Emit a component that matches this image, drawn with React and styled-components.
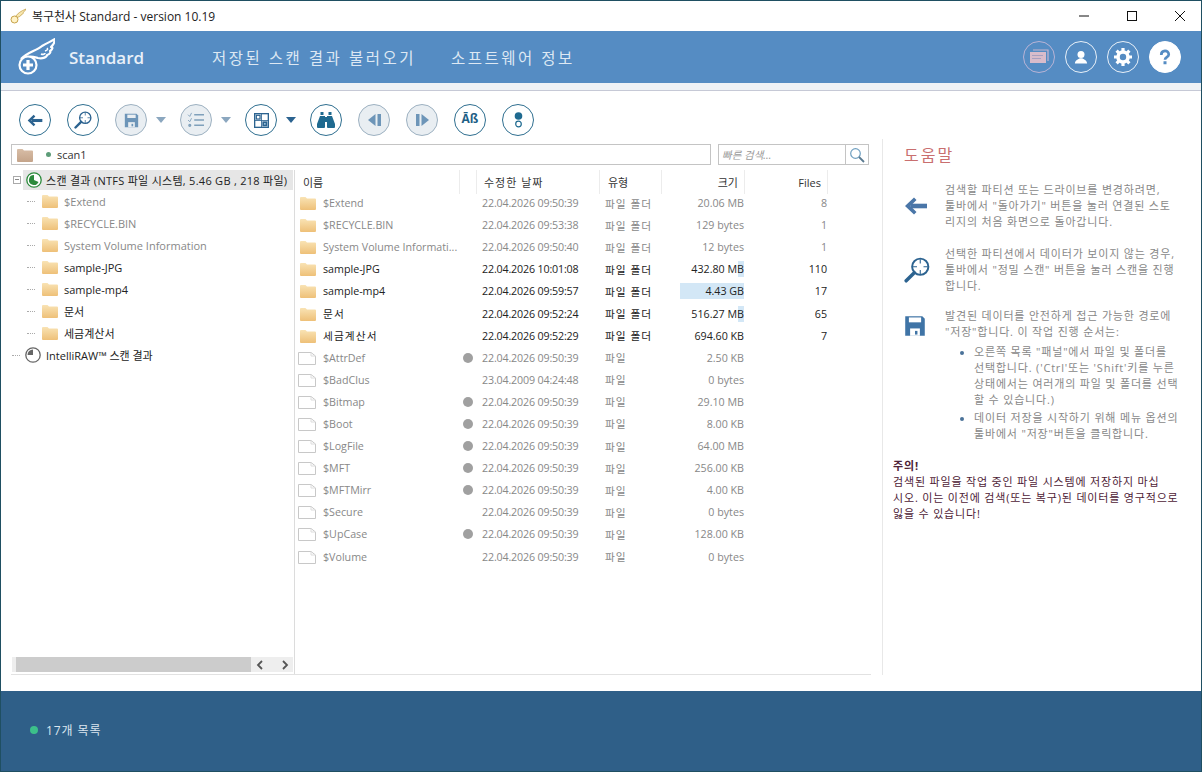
import React from "react";
import styled, { createGlobalStyle } from "styled-components";

const Global = createGlobalStyle`
  html, body { margin: 0; padding: 0; background: #fff; }
  body { font-family: "Open Sans", "Noto Sans CJK KR", sans-serif; font-size: 11px; }
  * { box-sizing: border-box; }
`;

const Win = styled.div`
  width: 1202px; height: 772px; border: 1px solid #1f4f62; display: flex; flex-direction: column; background: #fff; overflow: hidden;
`;
const TitleBar = styled.div`
  height: 30px; display: flex; align-items: center; padding-left: 9px; gap: 6px; font-size: 12px; color: #222; flex: none;
`;
const TitleText = styled.span`flex: 1;`;
const WinBtn = styled.div`
  width: 42px; height: 30px; display: flex; align-items: center; justify-content: center;
`;
const Head = styled.div`
  height: 52px; background: #558cc3; display: flex; align-items: center; padding-left: 16px; flex: none;
`;
const Brand = styled.div`
  font-size: 17px; font-weight: 600; color: #e9f0f8; margin-left: 14px; width: 143px;
`;
const Nav = styled.div`
  font-size: 15.5px; color: #dde8f3; margin-right: 35px; letter-spacing: 2.5px; white-space: nowrap;
`;
const HeadIcons = styled.div`
  margin-left: auto; display: flex; gap: 10px; padding-right: 20px;
`;
const HeadCircle = styled.div`
  width: 32px; height: 32px; border-radius: 50%; display: flex; align-items: center; justify-content: center;
  border: 1.5px solid ${p => p.$c || "#e8f0f8"}; background: ${p => p.$fill ? "#fff" : "transparent"};
`;
const Stripe = styled.div`
  height: 8px; background: #eef2f6; border-bottom: 1px solid #c6c9d6; flex: none;
`;
const Body = styled.div`
  flex: 1; display: flex; min-height: 0; padding-bottom: 16px;
`;
const Left = styled.div`
  width: 881px; padding: 0 11px 0 10px; display: flex; flex-direction: column;
`;
const Toolbar = styled.div`
  height: 53px; flex: none; display: flex; align-items: center; padding: 5px 0 0 8px;
`;
const Tool = styled.div`
  width: 32px; height: 32px; border-radius: 50%; flex: none; display: flex; align-items: center; justify-content: center;
  border: 1.5px solid ${p => p.$off ? "#9db1c1" : "#2f6f90"}; background: ${p => p.$off ? "#e9eef2" : "#fff"};
  margin-right: ${p => p.$mr ?? 16}px;
`;
const Caret = styled.div`
  width: 0; height: 0; border-left: 5px solid transparent; border-right: 5px solid transparent;
  border-top: 6px solid ${p => p.$off ? "#8ba7bf" : "#2c6390"}; margin-right: 14px; margin-left: 9px; flex: none;
`;
const PathRow = styled.div`
  display: flex; gap: 7px; height: 21px; flex: none; padding-right: 2px;
`;
const PathBox = styled.div`
  width: 700px; border: 1px solid #c4c4c4; display: flex; align-items: center; padding-left: 5px; color: #333;
`;
const Dot = styled.span`
  width: 5px; height: 5px; border-radius: 50%; background: #5d9c78; margin: 0 6px 0 13px;
`;
const SearchBox = styled.div`
  width: 151px; border: 1px solid #c4c4c4; display: flex; align-items: center; color: #999; font-style: italic; font-size: 10.5px; padding-left: 3px;
`;
const SearchLabel = styled.span`flex: 1;`;
const SearchBtn = styled.div`
  width: 23px; height: 100%; border-left: 1px solid #c4c4c4; display: flex; align-items: center; justify-content: center;
`;
const Panels = styled.div`
  flex: 1; min-height: 0; margin: 5px 0 0 0; display: flex; border-bottom: 1px solid #e2e2e2;
`;
const Tree = styled.div`
  width: 284px; border-right: 1px solid #dcdcdc; flex: none; display: flex; flex-direction: column;
  padding: 0 0 0 1px;
`;
const TreeRows = styled.div`flex: 1;`;
const TreeRow = styled.div`
  height: ${p => p.$h ?? 22}px; display: flex; align-items: center; white-space: nowrap;
  color: ${p => p.$dark ? "#222" : "#888"};
  font-size: 11px;
`;
const Expander = styled.div`
  width: 8px; height: 8px; border: 1px solid #aaa; margin: 0 2px 0 1px; flex: none; position: relative;
  &::after { content: ""; position: absolute; left: 1px; right: 1px; top: 2px; height: 1px; background: #888; }
`;
const RootSel = styled.div`
  height: 20px; width: 270px; background: #e6e6e6; display: flex; align-items: center; padding-left: 3px; gap: 4px; color: #222;
`;
const RootLabel = styled.span`letter-spacing: .28px;`;
const Dots = styled.div`
  width: 8px; border-top: 1px dotted #aaa; flex: none; margin: 0 ${p => p.$mr ?? 7}px 0 ${p => p.$ml ?? 15}px;
`;
const TreeFolder = styled.span`margin-right: 6px; display: flex;`;
const RawIcon = styled.span`margin-right: 5px; display: flex;`;
const Scroll = styled.div`
  height: 15px; margin: 0 1px 2px 0; background: #eeeeee; display: flex; align-items: center; padding-left: 4px; flex: none;
`;
const Thumb = styled.div`width: 235px; height: 15px; background: #cccccc; flex: none;`;
const Arrows = styled.div`flex: 1; display: flex; justify-content: space-between; padding: 0 3px 0 4px;`;
const Table = styled.div`flex: 1; min-width: 0;`;
const Cols = "165px 17px 123px 62px 83px 83px";
const HeadRow = styled.div`
  display: grid; grid-template-columns: ${Cols}; height: 24px; margin-bottom: -2px; color: #333; font-size: 11px;
`;
const HCell = styled.div`
  border-right: 1px solid #ececec; display: flex; align-items: center; white-space: nowrap;
  padding: 0 ${p => p.$r ?? 0}px 0 ${p => p.$l ?? 0}px; justify-content: ${p => p.$end ? "flex-end" : "flex-start"};
  letter-spacing: ${p => p.$ls ?? 0}px;
`;
const Row = styled.div`
  display: grid; grid-template-columns: ${Cols}; height: 22.1px; align-items: center; white-space: nowrap;
  color: ${p => p.$dark ? "#222" : "#888"}; font-size: 10.7px;
`;
const NameCell = styled.div`
  display: flex; align-items: center; gap: 7px; padding-left: ${p => p.$file ? 3 : 5}px; overflow: hidden;
  letter-spacing: ${p => p.$ko ? 1.1 : 0}px;
`;
const FlagCell = styled.div`display: flex; justify-content: center; padding-right: 1px;`;
const Flag = styled.span`width: 10px; height: 10px; border-radius: 50%; background: #a0a0a0;`;
const DateCell = styled.div`padding-left: 5px; letter-spacing: -.16px;`;
const TypeCell = styled.div`padding-left: 5px; letter-spacing: 1px;`;
const SizeCell = styled.div`
  height: 16px; line-height: 16px; text-align: right; margin-right: 1px;
  background: linear-gradient(#d3e7f6, #d3e7f6) no-repeat right top / ${p => p.$bar || 0}px 100%;
`;
const FilesCell = styled.div`text-align: right; padding-right: 1px;`;
const Help = styled.div`
  flex: 1; border-left: 1px solid #e8e8e8; margin-top: 48px; padding: 0 0 0 10px; color: #888; font-size: 11px; line-height: 16px; letter-spacing: .82px;
`;
const HelpTitle = styled.div`
  font-size: 16px; color: #c96f6f; line-height: 22px; margin: 5px 0 16px 11px; letter-spacing: 2px;
`;
const HelpItem = styled.div`
  display: flex; margin-bottom: ${p => p.$mb ?? 16}px;
`;
const HelpIcon = styled.div`
  width: 52px; flex: none; padding-left: 11px; display: flex; align-items: ${p => p.$top ? "flex-start" : "center"}; padding-top: ${p => p.$top ? 7 : 0}px;
`;
const HelpBody = styled.div`flex: 1; white-space: nowrap;`;
const Bullets = styled.ul`
  list-style: none; margin: 4px 0 0; padding: 0 0 0 29px;
`;
const Bullet = styled.li`
  position: relative; margin-bottom: 2px;
  &::before { content: ""; position: absolute; left: -14px; top: 7px; width: 4px; height: 4px; border-radius: 50%; background: #4a7299; }
`;
const Warn = styled.div`
  color: #4e2236; white-space: nowrap; margin-top: 14px;
`;
const WarnT = styled.div`font-weight: 700;`;
const Foot = styled.div`
  height: 80px; flex: none; background: #2f5f88; display: flex; align-items: center; padding: 0 0 2px 29px; color: #dbe6ef; font-size: 12px; letter-spacing: .9px;
`;
const FootDot = styled.span`
  width: 8px; height: 8px; border-radius: 50%; background: #3cc08a; margin-right: 8px;
`;

const Folder = ({ tone }) => (
  <svg width="16" height="14" viewBox="0 0 16 14">
    <defs>
      <linearGradient id={tone ? "fb" : "fa"} x1="0" y1="0" x2="0" y2="1">
        <stop offset="0" stopColor={tone ? "#d8bda6" : "#f9e3b4"} />
        <stop offset="1" stopColor={tone ? "#c4a48a" : "#eec078"} />
      </linearGradient>
    </defs>
    <path d="M0 2 Q0 1 1 1 H5.5 L7 2.5 H15 Q16 2.5 16 3.5 V13 Q16 14 15 14 H1 Q0 14 0 13Z" fill={`url(#${tone ? "fb" : "fa"})`} />
  </svg>
);
const FileI = () => (
  <svg width="18" height="14" viewBox="0 0 18 14">
    <path d="M.5 1.5 H13 L17.5 5 V13.5 H.5Z" fill="#fff" stroke="#c8c8c8" />
    <path d="M13 1.5 V5 H17.5" fill="none" stroke="#dcdcdc" />
  </svg>
);
const Wing = ({ s = 38 }) => (
  <svg width={s} height={s} viewBox="0 0 38 38">
    <path d="M4 21 C10 14 19 13 25 8 C30 5 35 3 38 1 C38 5 36 7 34 9 C36 9 36 11 33 13 C34 14 33 16 30 17 C30 19 26 21 21 20 C17 19 14 18 11 19"
      fill="none" stroke="#fff" strokeWidth="2.2" strokeLinejoin="round" />
    <path d="M30 10 C31 11 31 12 28 13 M28 15 C28 16 26 17 24 16" fill="none" stroke="#fff" strokeWidth="1.6" />
    <circle cx="11" cy="27" r="8.5" fill="#558cc3" stroke="#fff" strokeWidth="2.2" />
    <path d="M11 22 V32 M6 27 H16" stroke="#fff" strokeWidth="3.2" />
  </svg>
);
const BackI = ({ c = "#2c6390", w = 16, h = 13 }) => (
  <svg width={w} height={h} viewBox="0 0 24 18"><path d="M23 9 H7" stroke={c} strokeWidth="4.6" /><path d="M10 .5 L1 9 L10 17.5 L12.5 15 L6.5 9 L12.5 3Z" fill={c} /></svg>
);
const ScanI = ({ s = 18 }) => (
  <svg width={s} height={s} viewBox="0 0 24 24">
    <circle cx="15" cy="9" r="7.5" fill="#fff" stroke="#2c6390" strokeWidth="1.8" />
    <path d="M15 2 V6 M15 12 V16 M8 9 H12 M18 9 H22" stroke="#2c6390" strokeWidth="1" />
    <path d="M9.5 14.5 L2 22" stroke="#2c6390" strokeWidth="3.2" strokeLinecap="round" />
  </svg>
);
const SaveI = ({ c = "#6d95b8", s = 15, bg = "#e9eef2" }) => (
  <svg width={s} height={s} viewBox="0 0 18 18">
    <path d="M1 1 H15 L17 3 V17 H1Z" fill={c} />
    <rect x="4" y="2" width="10" height="4" fill={bg} />
    <rect x="5" y="11" width="8" height="6" fill={bg} />
    <rect x="9" y="13" width="2" height="3" fill={c} />
  </svg>
);
const ListI = () => (
  <svg width="18" height="16" viewBox="0 0 20 18" fill="none" stroke="#7fa0bb" strokeWidth="1.6">
    <path d="M8 3 H19 M8 9 H19 M8 15 H19" />
    <path d="M1 3 L3 5 L5 1 M1 9 L3 11 L5 7" strokeWidth="1" />
    <circle cx="3" cy="15" r="1" />
  </svg>
);
const GridI = () => (
  <svg width="15" height="15" viewBox="0 0 18 18">
    <rect x=".8" y=".8" width="16.4" height="16.4" fill="#fff" stroke="#2c6390" strokeWidth="1.6" />
    <rect x="2" y="2" width="6" height="6" fill="#2c6390" />
    <rect x="10" y="10" width="6" height="6" fill="#2c6390" />
    <rect x="3.5" y="3.5" width="3" height="3" fill="#fff" />
    <rect x="12" y="12" width="2" height="2" fill="#9dc0d8" />
    <path d="M9 1 V17 M1 9 H17" stroke="#2c6390" strokeWidth="1" />
  </svg>
);
const BinoI = () => (
  <svg width="18" height="16" viewBox="0 0 18 16" fill="#1f6a90">
    <rect x="3.5" y="0" width="3" height="3" />
    <rect x="11.5" y="0" width="3" height="3" />
    <path d="M3 4 H8 V15 Q8 16 7 16 H1 Q0 16 0 15 V12Z" />
    <path d="M10 4 H15 L18 12 V15 Q18 16 17 16 H11 Q10 16 10 15Z" />
    <rect x="8" y="5" width="2" height="5" />
  </svg>
);
const PrevI = () => (
  <svg width="13" height="12" viewBox="0 0 13 12" fill="#6d95b8"><path d="M7.5 0 V12 L0 6Z" /><rect x="9.5" y="0" width="3.5" height="12" /></svg>
);
const NextI = () => (
  <svg width="13" height="12" viewBox="0 0 13 12" fill="#6d95b8"><rect x="0" y="0" width="3.5" height="12" /><path d="M5.5 0 V12 L13 6Z" /></svg>
);
const Glyph = styled.span`
  font-size: 12px; font-weight: 700; color: #1f5f86; font-family: "Open Sans", sans-serif; line-height: 1; margin-top: -2px;
`;
const DotsI = () => (
  <svg width="9" height="16" viewBox="0 0 9 16"><circle cx="4.5" cy="4" r="3.8" fill="#1f6a90" /><circle cx="4.5" cy="12" r="2.8" fill="#fff" stroke="#1f6a90" strokeWidth="1.2" /></svg>
);
const Pie = ({ c, d }) => (
  <svg width="16" height="16" viewBox="0 0 16 16">
    <circle cx="8" cy="8" r="7.2" fill="#fff" stroke={c} strokeWidth="1.3" />
    <path d={d} fill={c} />
  </svg>
);

const children = ["$Extend", "$RECYCLE.BIN", "System Volume Information", "sample-JPG", "sample-mp4", "문서", "세금계산서"];
const rows = [
  ["$Extend", 0, "22.04.2026 09:50:39", "파일 폴더", "20.06 MB", "8", 0, 0, 1],
  ["$RECYCLE.BIN", 0, "22.04.2026 09:53:38", "파일 폴더", "129 bytes", "1", 0, 0, 1],
  ["System Volume Informati...", 0, "22.04.2026 09:50:40", "파일 폴더", "12 bytes", "1", 0, 0, 1],
  ["sample-JPG", 1, "22.04.2026 10:01:08", "파일 폴더", "432.80 MB", "110", 0, 6, 1],
  ["sample-mp4", 1, "22.04.2026 09:59:57", "파일 폴더", "4.43 GB", "17", 0, 64, 1],
  ["문서", 1, "22.04.2026 09:52:24", "파일 폴더", "516.27 MB", "65", 0, 6, 1],
  ["세금계산서", 1, "22.04.2026 09:52:29", "파일 폴더", "694.60 KB", "7", 0, 0, 1],
  ["$AttrDef", 0, "22.04.2026 09:50:39", "파일", "2.50 KB", "", 1],
  ["$BadClus", 0, "23.04.2009 04:24:48", "파일", "0 bytes", "", 0],
  ["$Bitmap", 0, "22.04.2026 09:50:39", "파일", "29.10 MB", "", 1],
  ["$Boot", 0, "22.04.2026 09:50:39", "파일", "8.00 KB", "", 1],
  ["$LogFile", 0, "22.04.2026 09:50:39", "파일", "64.00 MB", "", 1],
  ["$MFT", 0, "22.04.2026 09:50:39", "파일", "256.00 KB", "", 1],
  ["$MFTMirr", 0, "22.04.2026 09:50:39", "파일", "4.00 KB", "", 1],
  ["$Secure", 0, "22.04.2026 09:50:39", "파일", "0 bytes", "", 0],
  ["$UpCase", 0, "22.04.2026 09:50:39", "파일", "128.00 KB", "", 1],
  ["$Volume", 0, "22.04.2026 09:50:39", "파일", "0 bytes", "", 0],
];

export default function App() {
  return (
    <Win>
      <Global />
      <TitleBar>
        <svg width="16" height="16" viewBox="0 0 16 16">
          <path d="M5 9 C8 5 11 3 16 1 C15 3 14 4 13 4.5 C14 5 13 6 11 7 C11 8 9 9 7 9.5Z" fill="#f7e7b0" stroke="#c09a3c" strokeWidth=".7" />
          <circle cx="4.5" cy="11.5" r="3.5" fill="#fff2c6" stroke="#c09a3c" strokeWidth=".9" />
        </svg>
        <TitleText>복구천사 Standard - version 10.19</TitleText>
        <WinBtn>
          <svg width="12" height="12" viewBox="0 0 12 12"><path d="M1 6 H11" stroke="#111" /></svg>
        </WinBtn>
        <WinBtn>
          <svg width="12" height="12" viewBox="0 0 12 12"><rect x="1.5" y="1.5" width="9" height="9" fill="none" stroke="#111" /></svg>
        </WinBtn>
        <WinBtn>
          <svg width="12" height="12" viewBox="0 0 12 12"><path d="M1 1 L11 11 M11 1 L1 11" stroke="#111" /></svg>
        </WinBtn>
      </TitleBar>
      <Head>
        <Wing />
        <Brand>Standard</Brand>
        <Nav>저장된 스캔 결과 불러오기</Nav>
        <Nav>소프트웨어 정보</Nav>
        <HeadIcons>
          <HeadCircle $c="#b9b4d6">
            <svg width="20" height="16" viewBox="0 0 20 16">
              <path d="M4 1 H19 V12" fill="none" stroke="#c7b5cf" strokeWidth="1.2" />
              <rect x="1" y="3" width="16" height="11" fill="#d9bccb" />
              <path d="M3 6.5 H14 M3 9.5 H12" stroke="#a8a0c0" strokeWidth="1.2" />
            </svg>
          </HeadCircle>
          <HeadCircle>
            <svg width="14" height="14" viewBox="0 0 16 16" fill="#fff"><circle cx="8" cy="5" r="4" /><path d="M1 15.5 C1.5 11 5 11 6.5 9.5 H9.5 C11 11 14.5 11 15 15.5Z" /></svg>
          </HeadCircle>
          <HeadCircle>
            <svg width="20" height="20" viewBox="0 0 20 20">
              <circle cx="10" cy="10" r="5" fill="none" stroke="#fff" strokeWidth="3.6" />
              <path d="M10 1 V4 M10 16 V19 M1 10 H4 M16 10 H19 M3.6 3.6 L5.8 5.8 M14.2 14.2 L16.4 16.4 M3.6 16.4 L5.8 14.2 M14.2 5.8 L16.4 3.6" stroke="#fff" strokeWidth="3.2" />
            </svg>
          </HeadCircle>
          <HeadCircle $fill $c="#fff">
            <svg width="12" height="17" viewBox="0 0 16 20" fill="none">
              <path d="M3 6.5 C3 -.5 13 -.5 13 6 C13 9.5 8 9.5 8 13" stroke="#558cc3" strokeWidth="3.6" />
              <rect x="6" y="15" width="4" height="4" fill="#558cc3" />
            </svg>
          </HeadCircle>
        </HeadIcons>
      </Head>
      <Stripe />
      <Body>
        <Left>
          <Toolbar>
            <Tool><BackI /></Tool>
            <Tool><ScanI /></Tool>
            <Tool $off $mr={0}><SaveI /></Tool>
            <Caret $off />
            <Tool $off $mr={0}><ListI /></Tool>
            <Caret $off />
            <Tool $mr={0}><GridI /></Tool>
            <Caret />
            <Tool><BinoI /></Tool>
            <Tool $off><PrevI /></Tool>
            <Tool $off><NextI /></Tool>
            <Tool><Glyph>Āß</Glyph></Tool>
            <Tool><DotsI /></Tool>
          </Toolbar>
          <PathRow>
            <PathBox>
              <Folder tone="b" />
              <Dot />
              scan1
            </PathBox>
            <SearchBox>
              <SearchLabel>빠른 검색...</SearchLabel>
              <SearchBtn>
                <svg width="16" height="16" viewBox="0 0 16 16" fill="none">
                  <circle cx="6.5" cy="6.5" r="4.8" stroke="#6f9fc0" strokeWidth="1.2" />
                  <path d="M10 10 L15 15" stroke="#5a7a90" strokeWidth="1.8" />
                </svg>
              </SearchBtn>
            </SearchBox>
          </PathRow>
          <Panels>
            <Tree>
              <TreeRows>
                <TreeRow $dark $h={20}>
                  <Expander />
                  <RootSel>
                    <Pie c="#2c8a3c" d="M8 8 V3 A5 5 0 1 0 12.5 10Z" />
                    <RootLabel>스캔 결과 (NTFS 파일 시스템, 5.46 GB , 218 파일)</RootLabel>
                  </RootSel>
                </TreeRow>
                {children.map((c, i) => (
                  <TreeRow key={c} $dark={i > 2}>
                    <Dots />
                    <TreeFolder><Folder /></TreeFolder>
                    {c}
                  </TreeRow>
                ))}
                <TreeRow $dark>
                  <Dots $ml={0} $mr={5} />
                  <RawIcon><Pie c="#666" d="M8 8 V2.5 A5.5 5.5 0 0 0 2.5 8Z" /></RawIcon>
                  IntelliRAW™ 스캔 결과
                </TreeRow>
              </TreeRows>
              <Scroll>
                <Thumb />
                <Arrows>
                  <svg width="10" height="10" viewBox="0 0 10 10"><path d="M7 1 L3 5 L7 9" fill="none" stroke="#555" strokeWidth="1.8" /></svg>
                  <svg width="10" height="10" viewBox="0 0 10 10"><path d="M3 1 L7 5 L3 9" fill="none" stroke="#555" strokeWidth="1.8" /></svg>
                </Arrows>
              </Scroll>
            </Tree>
            <Table>
              <HeadRow>
                <HCell $l={8}>이름</HCell>
                <HCell />
                <HCell $l={7} $ls={1}>수정한 날짜</HCell>
                <HCell $l={8}>유형</HCell>
                <HCell $end $r={6}>크기</HCell>
                <HCell $end $r={6}>Files</HCell>
              </HeadRow>
              {rows.map(r => (
                <Row key={r[0]} $dark={r[1]}>
                  <NameCell $file={!r[8]} $ko={/[가-힣]/.test(r[0])}>{r[8] ? <Folder /> : <FileI />}{r[0]}</NameCell>
                  <FlagCell>{r[6] ? <Flag /> : null}</FlagCell>
                  <DateCell>{r[2]}</DateCell>
                  <TypeCell>{r[3]}</TypeCell>
                  <SizeCell $bar={r[7]}>{r[4]}</SizeCell>
                  <FilesCell>{r[5]}</FilesCell>
                </Row>
              ))}
            </Table>
          </Panels>
        </Left>
        <Help>
          <HelpTitle>도움말</HelpTitle>
          <HelpItem>
            <HelpIcon><BackI c="#4a76a8" w={24} h={18} /></HelpIcon>
            <HelpBody>
              검색할 파티션 또는 드라이브를 변경하려면,<br />
              툴바에서 "돌아가기" 버튼을 눌러 연결된 스토<br />
              리지의 처음 화면으로 돌아갑니다.
            </HelpBody>
          </HelpItem>
          <HelpItem $mb={14}>
            <HelpIcon><ScanI s={26} /></HelpIcon>
            <HelpBody>
              선택한 파티션에서 데이터가 보이지 않는 경우,<br />
              툴바에서 "정밀 스캔" 버튼을 눌러 스캔을 진행<br />
              합니다.
            </HelpBody>
          </HelpItem>
          <HelpItem $mb={0}>
            <HelpIcon $top><SaveI c="#3f74a6" s={22} bg="#fff" /></HelpIcon>
            <HelpBody>
              발견된 데이터를 안전하게 접근 가능한 경로에<br />
              "저장"합니다. 이 작업 진행 순서는:
              <Bullets>
                <Bullet>
                  오른쪽 목록 "패널"에서 파일 및 폴더를<br />
                  선택합니다. ('Ctrl'또는 'Shift'키를 누른<br />
                  상태에서는 여러개의 파일 및 폴더를 선택<br />
                  할 수 있습니다.)
                </Bullet>
                <Bullet>
                  데이터 저장을 시작하기 위해 메뉴 옵션의<br />
                  툴바에서 "저장"버튼을 클릭합니다.
                </Bullet>
              </Bullets>
            </HelpBody>
          </HelpItem>
          <Warn>
            <WarnT>주의!</WarnT>
            검색된 파일을 작업 중인 파일 시스템에 저장하지 마십<br />
            시오. 이는 이전에 검색(또는 복구)된 데이터를 영구적으로<br />
            잃을 수 있습니다!
          </Warn>
        </Help>
      </Body>
      <Foot><FootDot />17개 목록</Foot>
    </Win>
  );
}
